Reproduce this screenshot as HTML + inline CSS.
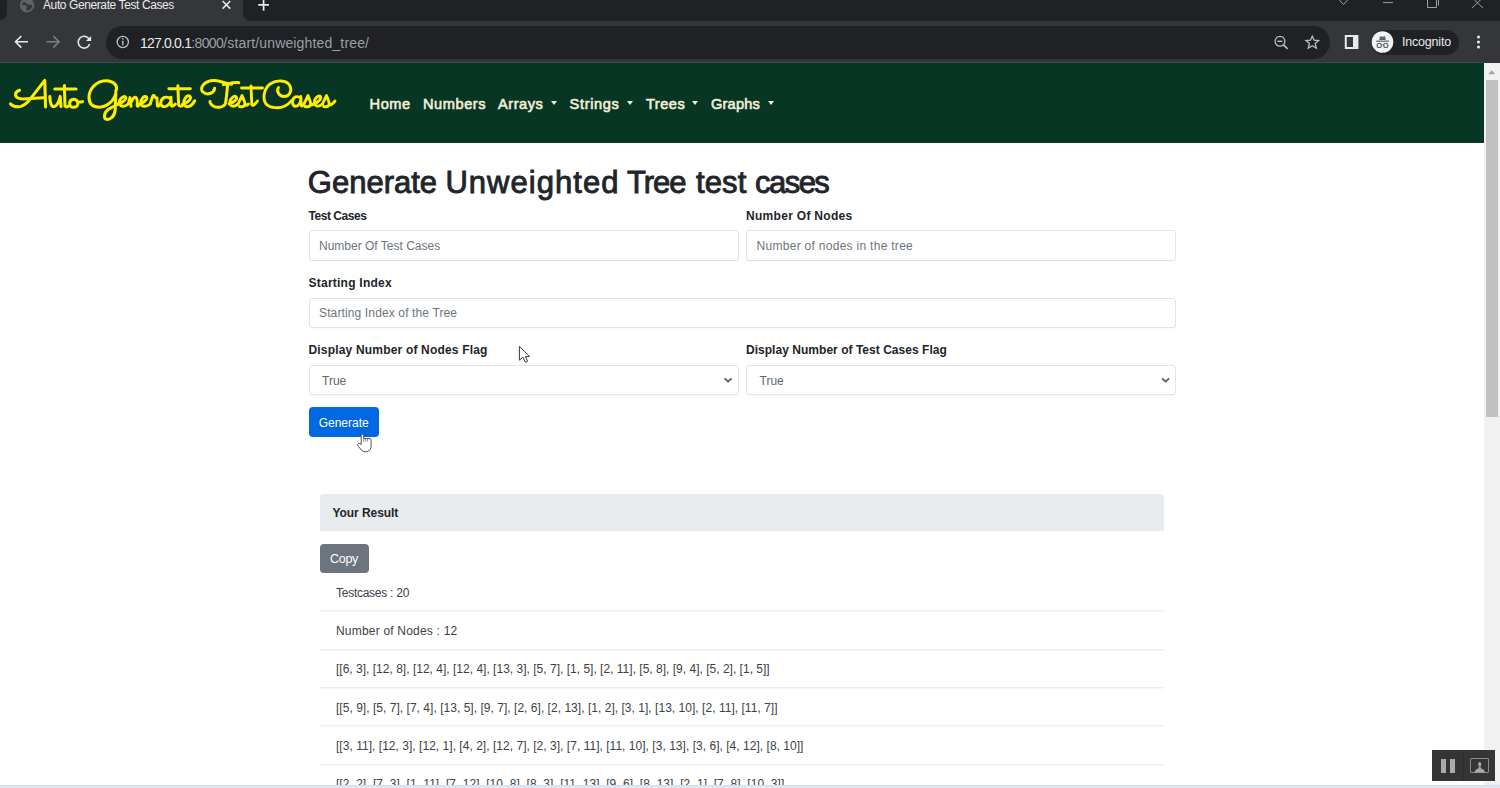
<!DOCTYPE html>
<html><head><meta charset="utf-8">
<style>
*{margin:0;padding:0;box-sizing:border-box}
html,body{width:1500px;height:788px;overflow:hidden;background:#fff;font-family:"Liberation Sans",sans-serif;position:relative}
.a{position:absolute}
.t{position:absolute;white-space:nowrap;line-height:1}
.lb{font-size:12px;font-weight:bold;color:#212529}
.in{position:absolute;border:1px solid #e4e4e4;border-radius:3px;background:#fff;box-shadow:0 1px 0 -0px rgba(0,0,0,0.02)}
.ph{font-size:12px;color:#6c757d}
.nv{font-size:14.6px;color:#f3eed8;-webkit-text-stroke:0.6px #f3eed8}
.cr{position:absolute;width:0;height:0;border-left:3.3px solid transparent;border-right:3.3px solid transparent;border-top:4px solid #f3eed8}
.row{font-size:12px;color:#3d4145}
.sep{position:absolute;left:320px;width:844px;height:2px;background:linear-gradient(#eeeeee 0 50%,#f7f7f7 50% 100%)}
svg{position:absolute;overflow:visible}
.hd{font-size:31px;color:#212529;-webkit-text-stroke:0.9px #212529}
</style></head><body>
<!-- ===== Chrome tab strip ===== -->
<div class="a" style="left:0;top:0;width:1500px;height:21px;background:#35363a"></div>
<div class="a" style="left:0;top:0;width:7px;height:20px;background:#202124;border-bottom-right-radius:8px"></div>
<div class="a" style="left:243px;top:0;width:1257px;height:21px;background:#202124;border-bottom-left-radius:8px"></div>
<div class="t" style="left:43px;top:-1px;font-size:12px;color:#e8eaed;letter-spacing:-0.4px">Auto Generate Test Cases</div>
<!-- ===== toolbar ===== -->
<div class="a" style="left:0;top:21px;width:1500px;height:42px;background:#35363a"></div>
<div class="a" style="left:0;top:62px;width:1484px;height:1px;background:#3d4b45"></div>
<div class="a" style="left:105.5px;top:26px;width:1224.5px;height:33px;background:#202124;border-radius:16.5px"></div>
<div class="t" style="left:140px;top:36px;font-size:14px;color:#9aa0a6"><span style="color:#e8eaed;letter-spacing:-0.8px">127.0.0.1</span><span style="letter-spacing:-0.6px">:8000</span><span style="letter-spacing:0.15px">/start/unweighted_tree/</span></div>
<div class="a" style="left:1371px;top:30px;width:88px;height:25px;background:#202124;border-radius:12.5px"></div>
<div class="t" style="left:1402px;top:36px;font-size:12.5px;color:#e8eaed;letter-spacing:-0.2px">Incognito</div>

<!-- ===== chrome icons ===== -->
<svg style="left:0;top:0" width="1500" height="64" viewBox="0 0 1500 64">
 <g fill="none" stroke-linecap="butt">
  <!-- globe -->
  <circle cx="27" cy="5.2" r="6.3" fill="none" stroke="#5f6368" stroke-width="1.9"/>
  <path d="M21.5 3.5 Q23 0.5 26 -0.5 L29.5 -1 Q32 0 33 3 L32.5 4.6 Q30 5 28 4.6 Q26 4 25.8 2.5 Q24.5 1.5 23 3 Z" fill="#5f6368"/>
  <path d="M21.2 5 Q23 4.5 25.5 5.2 Q27.5 6 26.8 7.5 Q26 8.6 26.3 10.2 L26 11.5 Q22.5 10.5 21.2 7 Z" fill="#5f6368"/>
  <!-- close x -->
  <path d="M222.6 1 L230.2 8.6 M230.2 1 L222.6 8.6" stroke="#e8eaed" stroke-width="1.5"/>
  <!-- plus -->
  <path d="M258.2 4.8 L269 4.8 M263.6 -0.5 L263.6 10.8" stroke="#e8eaed" stroke-width="1.7"/>
  <!-- window controls -->
  <path d="M1338.5 -1 L1343.5 4.5 L1348.5 -1" stroke="#9aa0a6" stroke-width="1"/>
  <path d="M1383 2.6 L1393 2.6" stroke="#9aa0a6" stroke-width="1"/>
  <path d="M1427.5 -1 L1427.5 7.5 L1436.5 7.5 L1436.5 -1 M1438.5 -1 L1438.5 5.5" stroke="#9aa0a6" stroke-width="1"/>
  <path d="M1472 -2.5 L1483 8 M1483 -2.5 L1472 8" stroke="#9aa0a6" stroke-width="1"/>
  <!-- back -->
  <path d="M15.5 41.8 L28 41.8 M21.3 36 L15.5 41.8 L21.3 47.6" stroke="#e8eaed" stroke-width="1.6"/>
  <!-- forward -->
  <path d="M46.6 41.8 L59 41.8 M53.3 36 L59 41.8 L53.3 47.6" stroke="#7d7f83" stroke-width="1.6"/>
  <!-- reload -->
  <path d="M89.3 39.4 A5.9 5.9 0 1 0 89.7 44" stroke="#dfe1e5" stroke-width="1.6"/>
  <path d="M91.1 35.9 L91.1 41.1 L85.9 41.1 Z" fill="#e8eaed"/>
  <!-- info -->
  <circle cx="122.8" cy="42" r="5.6" stroke="#bdc1c6" stroke-width="1.3"/>
  <path d="M122.8 40.8 L122.8 45.2" stroke="#bdc1c6" stroke-width="1.4"/>
  <circle cx="122.8" cy="38.9" r="0.8" fill="#bdc1c6"/>
  <!-- zoom -->
  <circle cx="1280" cy="41.3" r="4.9" stroke="#bdc1c6" stroke-width="1.3"/>
  <path d="M1277.5 41.3 L1282.5 41.3" stroke="#bdc1c6" stroke-width="1.4"/>
  <path d="M1283.6 44.9 L1287.6 48.9" stroke="#bdc1c6" stroke-width="1.5"/>
  <!-- star -->
  <path d="M1312.3 36.3 L1314.1 40.2 L1318.6 40.6 L1315.2 43.5 L1316.3 48.2 L1312.3 45.8 L1308.3 48.2 L1309.4 43.5 L1306 40.6 L1310.5 40.2 Z" stroke="#bdc1c6" stroke-width="1.3" stroke-linejoin="miter"/>
  <!-- sidebar -->
  <rect x="1345.8" y="36" width="11.6" height="12" stroke="#e8eaed" stroke-width="2"/>
  <rect x="1353" y="36" width="5" height="12" fill="#e8eaed"/>
  <!-- incognito -->
  <circle cx="1382.5" cy="42" r="10.8" fill="#f1f3f4"/>
  <path d="M1379.2 40 L1380 36.3 Q1382.5 37.2 1385 36.3 L1385.8 40 Z" fill="#5f6368"/>
  <path d="M1376.2 41.2 L1389 41.2" stroke="#5f6368" stroke-width="1.2"/>
  <circle cx="1379.2" cy="45.4" r="2.1" stroke="#5f6368" stroke-width="1.1"/>
  <circle cx="1385.8" cy="45.4" r="2.1" stroke="#5f6368" stroke-width="1.1"/>
  <path d="M1381.3 45 Q1382.5 44.3 1383.7 45" stroke="#5f6368" stroke-width="1"/>
  <!-- kebab -->
  <circle cx="1478.5" cy="37" r="1.5" fill="#e8eaed"/>
  <circle cx="1478.5" cy="42" r="1.5" fill="#e8eaed"/>
  <circle cx="1478.5" cy="46.9" r="1.5" fill="#e8eaed"/>
 </g>
</svg>

<!-- ===== navbar ===== -->
<div class="a" style="left:0;top:63px;width:1484px;height:80px;background:#073625"></div>
<svg style="left:0;top:0" width="1500" height="150" viewBox="0 0 1500 150">
<g fill="none" stroke="#ffee00" stroke-linecap="round" stroke-linejoin="round">
 <!-- segment 1: A u t o G -->
 <g transform="translate(5,72) scale(0.08)" stroke-width="38">
  <path d="M68 398 Q120 450 200 430 Q250 415 290 370 L497 105 L507 438"/>
  <path d="M182 228 Q120 250 135 300 Q160 345 270 335 L475 322"/>
  <path d="M560 305 Q565 440 615 432 Q665 420 690 305 L700 432"/>
  <path d="M742 168 L750 425 Q760 448 795 425"/>
  <path d="M622 212 L888 212"/>
  <path d="M862 340 Q805 345 808 400 Q812 445 862 440 Q915 435 910 385 Q905 345 862 340 M905 372 Q940 380 970 370"/>
  <path d="M1385 240 C1420 170 1350 110 1270 110 C1150 110 1050 200 1050 320 C1050 410 1110 440 1180 440 C1280 440 1370 350 1385 262 L1378 470 C1372 560 1310 600 1270 592 C1230 582 1235 510 1290 470 C1340 435 1380 420 1412 400"/>
 </g>
<g stroke-width="2.9">
  <path d="M118 104 C122 103 127 99.5 125.6 97 C123.6 95.3 119 99 119.3 103 C119.6 106.6 124 107.6 128.2 104"/>
  <path d="M128.2 104 L130 97.6 L131 106.4 M131.2 102.2 Q133.8 96.2 136 97.4 Q137.6 98.8 137.1 105.8 Q138 107.2 139.6 104"/>
  <path d="M139.6 104 C143 103 148 99.6 146.6 97 C144.6 95 140.5 99 140.8 103 C141 106.8 146 107.6 150.2 104"/>
  <path d="M150.2 104 L152.6 96.2 Q153.6 94.6 154.6 96.2 Q155.2 98 157 98 L157.4 106 Q158.6 106.8 160.2 104.2"/>
  <path d="M171 99.2 Q168 96.4 164.5 97.4 Q160.6 99.4 160.8 103.4 Q161.4 107 165 106.6 Q169 106 171 100.6 M171 97.2 L171.4 105.8 Q172.6 107.2 175.4 104"/>
 </g>
 <!-- segment 2: e n e r a t e T -->
 <g transform="translate(115,72) scale(0.07667)" stroke-width="39">
  <path d="M820 180 L830 430 Q845 462 895 430"/>
  <path d="M702 217 L982 217"/>
  <path d="M880 420 C950 410 1010 340 975 315 C930 290 880 380 905 430 C930 470 1000 455 1040 375"/>
  <path d="M1300 212 C1290 280 1200 310 1145 260 C1095 210 1170 105 1300 112 C1380 118 1440 150 1520 160"/>
  <path d="M1470 150 C1460 250 1455 350 1440 410 C1420 465 1310 475 1275 440 C1250 420 1235 400 1240 385"/>
 </g>
 <!-- segment 3: e s t C a s e s -->
 <g transform="translate(225,72) scale(0.07667)" stroke-width="39">
  <path d="M-20 165 C60 150 130 130 180 140"/>
 </g>
 <g stroke-width="2.9">
  <path d="M229 104 C233 103 238 99 236.2 96.8 C234 95 229.5 99 230 103 C230.5 106.6 234.5 107.5 238 104"/>
  <path d="M238 104 L242 95.6 Q245.5 103 244.8 105 Q243.5 107.5 239.5 106.5 M244.5 104.5 Q246 106 248.5 104"/>
  <path d="M251 86 L251.8 104.5 Q253 107.2 257.5 101"/>
  <path d="M241.5 88 L262.5 88"/>
  <path d="M278.5 87.5 C276 91 279 96.5 284 96.5 C290 96.5 292.5 90 289.5 85 C286 80 277 79.5 270 84 C263.5 89 262.5 99 266 104 C270 108.5 280 108.5 285 106 C288 104.5 290 102.5 291.5 100.5"/>
  <path d="M300.8 98.5 Q298.5 96 295.5 96.8 Q292.3 98.5 292.5 102.5 Q293 106.6 296 106.3 Q299.5 105.8 300.8 100 M300.8 96.5 L301.2 105.5 Q302 107 304 104"/>
  <path d="M304 104 L308 95.6 Q311.2 103 310.6 105 Q309.2 107.5 305.2 106.5 M310.3 104.5 Q311.5 106 313.5 104"/>
  <path d="M313.5 104 C317 103 322 99 320.5 96.6 C318.5 94.6 314 98.5 314.3 102.5 C314.6 106.5 318.5 107.5 322.5 104"/>
  <path d="M322.5 104 L326.5 95.6 Q329.7 103 329.1 105 Q327.7 107.5 323.7 106.5 M328.8 104.5 Q331 106 335 101"/>
 </g>
</g>
</svg>

<div class="t nv" style="left:369.6px;top:96.6px;letter-spacing:0.5px">Home</div>
<div class="t nv" style="left:423px;top:96.6px;letter-spacing:0.55px">Numbers</div>
<div class="t nv" style="left:498px;top:96.6px;letter-spacing:0.55px">Arrays</div>
<div class="cr" style="left:550.7px;top:101px"></div>
<div class="t nv" style="left:569.6px;top:96.6px;letter-spacing:0.65px">Strings</div>
<div class="cr" style="left:626.7px;top:101px"></div>
<div class="t nv" style="left:646px;top:96.6px;letter-spacing:0.5px">Trees</div>
<div class="cr" style="left:692.3px;top:101px"></div>
<div class="t nv" style="left:711px;top:96.6px;letter-spacing:0.2px">Graphs</div>
<div class="cr" style="left:767.7px;top:101px"></div>

<!-- ===== scrollbar ===== -->
<div class="a" style="left:1484px;top:63px;width:16px;height:722px;background:#f1f1f1"></div>
<div class="a" style="left:1485.5px;top:80px;width:12.5px;height:337px;background:#c1c1c1"></div>
<svg style="left:0;top:0" width="1500" height="100" viewBox="0 0 1500 100"><path d="M1488.2 74.2 L1495.2 74.2 L1491.7 70.3 Z" fill="#a3a3a3"/></svg>

<!-- ===== form ===== -->
<div class="t hd" style="left:307.8px;top:167px">Generate</div>
<div class="t hd" style="left:445.4px;top:167px;letter-spacing:1.04px">Unweighted</div>
<div class="t hd" style="left:627px;top:167px;letter-spacing:-1.03px">Tree</div>
<div class="t hd" style="left:696px;top:167px;letter-spacing:0.1px">test</div>
<div class="t hd" style="left:755px;top:167px;letter-spacing:-1.53px">cases</div>

<div class="t lb" style="left:308.5px;top:210.3px;letter-spacing:-0.45px">Test Cases</div>
<div class="t lb" style="left:746px;top:210.3px;letter-spacing:0.3px">Number Of Nodes</div>
<div class="in" style="left:308.5px;top:230px;width:430px;height:31px"></div>
<div class="in" style="left:745.5px;top:230px;width:430px;height:31px"></div>
<div class="t ph" style="left:319px;top:239.9px">Number Of Test Cases</div>
<div class="t ph" style="left:756.5px;top:239.9px;letter-spacing:0.29px">Number of nodes in the tree</div>

<div class="t lb" style="left:308.5px;top:276.5px;letter-spacing:0.24px">Starting Index</div>
<div class="in" style="left:308.5px;top:297.5px;width:867px;height:30px"></div>
<div class="t ph" style="left:319px;top:307.1px;letter-spacing:0.13px">Starting Index of the Tree</div>

<div class="t lb" style="left:308.5px;top:344.4px;letter-spacing:0.18px">Display Number of Nodes Flag</div>
<div class="t lb" style="left:746px;top:344.4px;letter-spacing:0.03px">Display Number of Test Cases Flag</div>
<div class="in" style="left:308.5px;top:364.5px;width:430px;height:30px"></div>
<div class="in" style="left:745.5px;top:364.5px;width:430px;height:30px"></div>
<div class="t" style="left:322px;top:375.1px;font-size:12px;color:#62676c">True</div>
<div class="t" style="left:759.5px;top:375.1px;font-size:12px;color:#62676c">True</div>
<svg style="left:0;top:0" width="1" height="1"><path d="M724.6 378.4 L728.1 381.6 L731.6 378.4" stroke="#555a5e" stroke-width="1.8" fill="none"/><path d="M1162.1 378.4 L1165.6 381.6 L1169.1 378.4" stroke="#555a5e" stroke-width="1.8" fill="none"/></svg>

<div class="a" style="left:308.5px;top:407px;width:70.5px;height:30px;background:#0068e0;border-radius:4px"></div>
<div class="t" style="left:318.7px;top:416.5px;font-size:12px;color:#fff">Generate</div>

<!-- ===== result ===== -->
<div class="a" style="left:320px;top:493.5px;width:844px;height:37px;background:#e9ecef;border-radius:3px 3px 0 0"></div>
<div class="t lb" style="left:332.5px;top:506.6px;letter-spacing:-0.07px">Your Result</div>
<div class="a" style="left:320px;top:543.5px;width:48.5px;height:29.5px;background:#6c757d;border-radius:4px"></div>
<div class="t" style="left:330px;top:553.1px;font-size:12.5px;color:#fff;letter-spacing:-0.3px">Copy</div>

<div class="t row" style="left:336px;top:587.04px;letter-spacing:-0.26px">Testcases : 20</div>
<div class="t row" style="left:336px;top:625.24px;letter-spacing:0.2px">Number of Nodes : 12</div>
<div class="t row" style="left:336px;top:663.24px;letter-spacing:0.01px">[[6, 3], [12, 8], [12, 4], [12, 4], [13, 3], [5, 7], [1, 5], [2, 11], [5, 8], [9, 4], [5, 2], [1, 5]]</div>
<div class="t row" style="left:336px;top:701.64px;letter-spacing:0.03px">[[5, 9], [5, 7], [7, 4], [13, 5], [9, 7], [2, 6], [2, 13], [1, 2], [3, 1], [13, 10], [2, 11], [11, 7]]</div>
<div class="t row" style="left:336px;top:740.04px;letter-spacing:0.03px">[[3, 11], [12, 3], [12, 1], [4, 2], [12, 7], [2, 3], [7, 11], [11, 10], [3, 13], [3, 6], [4, 12], [8, 10]]</div>
<div class="t row" style="left:336px;top:778.44px;letter-spacing:0.03px">[[2, 2], [7, 3], [1, 11], [7, 12], [10, 8], [8, 3], [11, 13], [9, 6], [8, 13], [2, 1], [7, 8], [10, 3]]</div>
<div class="sep" style="top:610px"></div>
<div class="sep" style="top:649px"></div>
<div class="sep" style="top:687px"></div>
<div class="sep" style="top:725px"></div>
<div class="sep" style="top:764px"></div>

<!-- ===== cursors ===== -->
<svg style="left:0;top:0" width="1500" height="788" viewBox="0 0 1500 788">
 <path d="M519.4 346.4 L519.4 360.2 L523 357.2 L525.4 362.3 L527.6 361.3 L525.4 356.5 L529.6 356.4 Z" fill="#fff" stroke="#3a3a3e" stroke-width="1" stroke-linejoin="round"/>
 <path d="M361.2 442 L361.2 435.2 Q362.4 433.4 363.6 435.2 L363.6 438.6 L370 438.6 Q371.1 438.8 371.1 440.2 L371.1 446.8 Q370.3 451.8 365.4 451.8 Q362.8 451.8 361.3 450 L357.8 445.5 Q357.2 443.8 358.6 443.4 Q359.9 443.2 361.2 444.6 Z" fill="#fff" stroke="#555" stroke-width="1" stroke-linejoin="round"/>
 <path d="M365.6 438.8 L365.6 441.6 M367.6 438.8 L367.6 441.6 M363.6 438.6 L363.6 441.8" stroke="#777" stroke-width="0.8" fill="none"/>
</svg>
<!-- ===== video overlay ===== -->
<div class="a" style="left:1432px;top:750px;width:63px;height:31px;background:#353535"></div>
<div class="a" style="left:1463px;top:750px;width:1px;height:31px;background:#2c2c2c"></div>
<div class="a" style="left:1440.7px;top:758.7px;width:5.2px;height:14.3px;background:#aaa"></div>
<div class="a" style="left:1449.6px;top:758.7px;width:5.2px;height:14.3px;background:#aaa"></div>
<div class="a" style="left:1470.3px;top:758.3px;width:18.6px;height:15px;border:1.2px solid #8a8a8a;border-radius:1px"></div>
<svg style="left:0;top:0" width="1500" height="788" viewBox="0 0 1500 788"><ellipse cx="1479.7" cy="764.3" rx="1.5" ry="2.2" fill="#aaa"/><path d="M1474.3 772.6 Q1475.2 769.3 1478.4 768.6 L1478.8 766.5 L1480.6 766.5 L1481 768.6 Q1484.2 769.3 1485.1 772.6 Z" fill="#aaa"/></svg>

<!-- ===== taskbar edge ===== -->
<div class="a" style="left:0;top:785px;width:1500px;height:1px;background:#d7dde4"></div>
<div class="a" style="left:0;top:786px;width:1500px;height:2px;background:#dfe8f1"></div>
</body></html>
